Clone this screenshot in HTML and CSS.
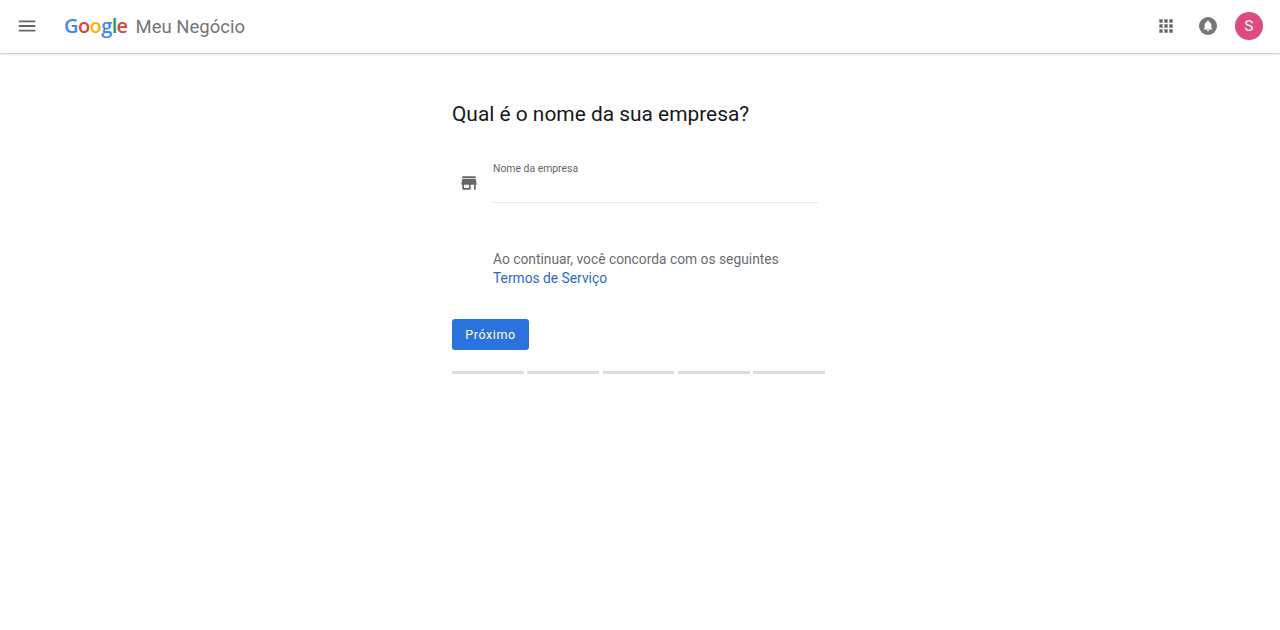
FILE: index.html
```html
<!DOCTYPE html>
<html lang="pt-BR">
<head>
    <meta charset="UTF-8">
    <title>Google Meu Negócio</title>
    <link rel="stylesheet" href="styles.css">
</head>
<body>
    <header class="topbar">
        <svg class="menu-icon" viewBox="0 0 24 24"><path d="M3 18h18v-2H3v2zm0-5h18v-2H3v2zm0-7v2h18V6H3z"/></svg>
        <div class="brand">
            <span class="google"><span class="g-blue">G</span><span class="g-red">o</span><span class="g-yellow">o</span><span class="g-blue">g</span><span class="g-green">l</span><span class="g-red">e</span></span>
            <span class="product">Meu Negócio</span>
        </div>
        <div class="topbar-right">
            <svg class="apps-icon" viewBox="0 0 24 24"><path d="M4 8h4V4H4v4zm6 12h4v-4h-4v4zm-6 0h4v-4H4v4zm0-6h4v-4H4v4zm6 0h4v-4h-4v4zm6-10v4h4V4h-4zm-6 4h4V4h-4v4zm6 6h4v-4h-4v4zm0 6h4v-4h-4v4z"/></svg>
            <svg class="bell-icon" viewBox="0 0 18 18"><circle cx="9" cy="9" r="9" fill="#757575"/><path fill="#fff" d="M9 3.600c-.5 0-.9.4-.9.9v.3C6.600 5.200 5.700 6.500 5.700 8v2.700L4.500 12v.6h9V12l-1.200-1.300V8c0-1.500-.9-2.800-2.400-3.200v-.3c0-.5-.4-.9-.9-.9zM7.800 13.300c0 .6.5 1.100 1.200 1.100s1.200-.5 1.200-1.100H7.800z"/></svg>
            <div class="avatar">S</div>
        </div>
    </header>

    <main class="content">
        <h1 class="title">Qual é o nome da sua empresa?</h1>

        <div class="field-row">
            <svg class="store-icon" viewBox="0 0 24 24"><path d="M20 4H4v2h16V4zm1 10v-2l-1-5H4l-1 5v2h1v6h10v-6h4v6h2v-6h1zm-9 4H6v-4h6v4z"/></svg>
            <div class="field">
                <label class="field-label" for="business">Nome da empresa</label>
                <input class="field-input" id="business" type="text">
            </div>
        </div>

        <p class="terms">Ao continuar, você concorda com os seguintes<br><a href="#">Termos de Serviço</a></p>

        <button class="next-button">Próximo</button>

        <div class="steps">
            <span></span>
            <span></span>
            <span></span>
            <span></span>
            <span></span>
        </div>
    </main>
</body>
</html>
```

FILE: styles.css
```css
body {
    margin: 0;
    background: #fff;
    font-family: Roboto, Arial, sans-serif;
    color: #202124;
}

.topbar {
    display: flex;
    align-items: center;
    height: 52px;
    padding: 0 17px 1px 16px;
    background: #fff;
    box-shadow: 0 1px 2px rgba(0, 0, 0, 0.25);
}

.menu-icon {
    width: 22px;
    height: 22px;
    fill: #666;
}

.brand {
    display: flex;
    align-items: baseline;
    margin-left: 26px;
    margin-bottom: 2px;
}

.google {
    font-family: "Open Sans", Arial, sans-serif;
    font-size: 20px;
    font-weight: 600;
    letter-spacing: -0.6px;
}

.g-blue { color: #4285f4; }
.g-red { color: #db4437; }
.g-yellow { color: #f4b400; }
.g-green { color: #0f9d58; }

.product {
    margin-left: 8px;
    font-size: 18.5px;
    color: #757575;
}

.topbar-right {
    display: flex;
    align-items: center;
    margin-left: auto;
}

.apps-icon {
    width: 20px;
    height: 20px;
    fill: #666;
}

.bell-icon {
    width: 18px;
    height: 18px;
    margin-left: 23px;
}

.avatar {
    width: 28px;
    height: 28px;
    margin-left: 18px;
    border-radius: 50%;
    background: #dc4c7c;
    color: #fff;
    font-size: 15px;
    line-height: 28px;
    text-align: center;
}

.content {
    width: 373px;
    margin-left: 452px;
}

.title {
    margin: 47px 0 0;
    font-size: 20.9px;
    font-weight: 400;
    line-height: 28px;
    color: #17181a;
}

.field-row {
    display: flex;
    margin-top: 34px;
}

.store-icon {
    width: 20px;
    height: 20px;
    margin-top: 11px;
    margin-left: 7px;
    fill: #666;
}

.field {
    width: 325px;
    margin-left: 14px;
}

.field-label {
    display: block;
    font-size: 10.4px;
    line-height: 14px;
    color: #666;
}

.field-input {
    display: block;
    box-sizing: border-box;
    width: 100%;
    height: 27px;
    padding: 0;
    border: 0;
    border-bottom: 1px solid #e8e8e8;
    outline: none;
}

.terms {
    margin: 47px 0 0 41px;
    font-size: 13.8px;
    line-height: 19px;
    color: #6a6c70;
}

.terms a {
    color: #2a6cc4;
    text-decoration: none;
}

.next-button {
    display: block;
    width: 77px;
    height: 31px;
    margin-top: 31px;
    padding: 0;
    border: 0;
    border-radius: 3px;
    background: #2a73df;
    color: #fff;
    font-family: Roboto, Arial, sans-serif;
    font-size: 12.5px;
    letter-spacing: 0.6px;
}

.steps {
    display: flex;
    gap: 3.5px;
    margin-top: 21px;
}

.steps span {
    flex: 1;
    height: 3px;
    background: #dadce0;
}
```
